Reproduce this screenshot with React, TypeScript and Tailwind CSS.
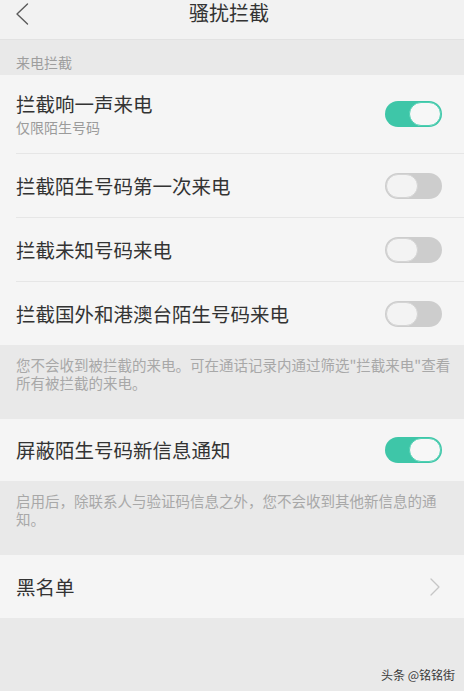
import React from "react";

function Toggle({ on }: { on: boolean }) {
  return on ? (
    <div className="w-[57px] h-[26px] rounded-full bg-[#3ec6a8] flex items-center justify-end pr-[1px]">
      <div className="w-[32px] h-[24px] rounded-full bg-[#f7f7f7] border-[1.5px] border-[#4fd0b3]"></div>
    </div>
  ) : (
    <div className="w-[57px] h-[26px] rounded-full bg-[#cdcdcd] flex items-center justify-start pl-[1px]">
      <div className="w-[32px] h-[24px] rounded-full bg-[#f3f3f3] border-[1.5px] border-[#d4d4d4]"></div>
    </div>
  );
}

function SwitchRow({
  title,
  sub,
  on,
  h,
  divider,
}: {
  title: string;
  sub?: string;
  on: boolean;
  h: string;
  divider?: boolean;
}) {
  return (
    <div className="bg-[#f5f5f5] pl-4">
      <div
        className={`${h} flex items-center justify-between pr-[22px] ${
          divider ? "border-b border-[#e6e6e6]" : ""
        }`}
      >
        <div className="flex flex-col">
          <span className="text-[19.5px] leading-[26px] text-[#333333]">{title}</span>
          {sub && <span className="text-[14px] leading-[20px] text-[#9b9b9b]">{sub}</span>}
        </div>
        <Toggle on={on} />
      </div>
    </div>
  );
}

export default function App() {
  return (
    <div className="w-[464px] h-[691px] bg-[#e9e9e9] flex flex-col font-['Noto_Sans_CJK_SC',sans-serif] overflow-hidden">
      {/* Header */}
      <div className="h-[40px] shrink-0 bg-[#f2f2f2] border-b border-[#e2e2e2] grid grid-cols-[1fr_auto_1fr] items-start">
        <div className="pl-[15px] pt-[3px]">
          <svg width="14" height="22" viewBox="0 0 14 22" fill="none">
            <path d="M12.5 1 L2 11 L12.5 21" stroke="#5a5a5a" strokeWidth="1.4" strokeLinecap="round" strokeLinejoin="round" />
          </svg>
        </div>
        <div className="text-[20px] leading-[26px] text-[#333333] pr-[6px]">骚扰拦截</div>
        <div></div>
      </div>

      {/* Section label */}
      <div className="h-[35px] shrink-0 px-4 pt-[13px]">
        <span className="text-[14px] leading-[18px] text-[#9e9e9e] block">来电拦截</span>
      </div>

      <SwitchRow title="拦截响一声来电" sub="仅限陌生号码" on={true} h="h-[79px]" divider />
      <SwitchRow title="拦截陌生号码第一次来电" on={false} h="h-[64px]" divider />
      <SwitchRow title="拦截未知号码来电" on={false} h="h-[64px]" divider />
      <SwitchRow title="拦截国外和港澳台陌生号码来电" on={false} h="h-[63px]" />

      {/* Note */}
      <div className="h-[74px] shrink-0 px-4 pt-[11px] text-[14.5px] leading-[18px] text-[#a8a8a8] whitespace-nowrap">
        您不会收到被拦截的来电。可在通话记录内通过筛选"拦截来电"查看
        <br />
        所有被拦截的来电。
      </div>

      <SwitchRow title="屏蔽陌生号码新信息通知" on={true} h="h-[62px]" />

      <div className="h-[74px] shrink-0 px-4 pt-[11px] text-[14.5px] leading-[18px] text-[#a8a8a8] whitespace-nowrap">
        启用后，除联系人与验证码信息之外，您不会收到其他新信息的通
        <br />
        知。
      </div>

      {/* Blacklist */}
      <div className="h-[63px] shrink-0 bg-[#f5f5f5] pl-4 pr-[24px] flex items-center justify-between">
        <span className="text-[19.5px] leading-[26px] text-[#333333]">黑名单</span>
        <svg width="10" height="18" viewBox="0 0 10 18" fill="none">
          <path d="M1 1 L9 9 L1 17" stroke="#c6c6c6" strokeWidth="1.3" strokeLinecap="round" strokeLinejoin="round" />
        </svg>
      </div>

      {/* Bottom area with watermark */}
      <div className="flex-1 flex items-end justify-end pr-[9px] pb-[7px]">
        <span className="text-[12px] leading-[18px] text-[#3c3c3c]">头条 @铭铭街</span>
      </div>
    </div>
  );
}
